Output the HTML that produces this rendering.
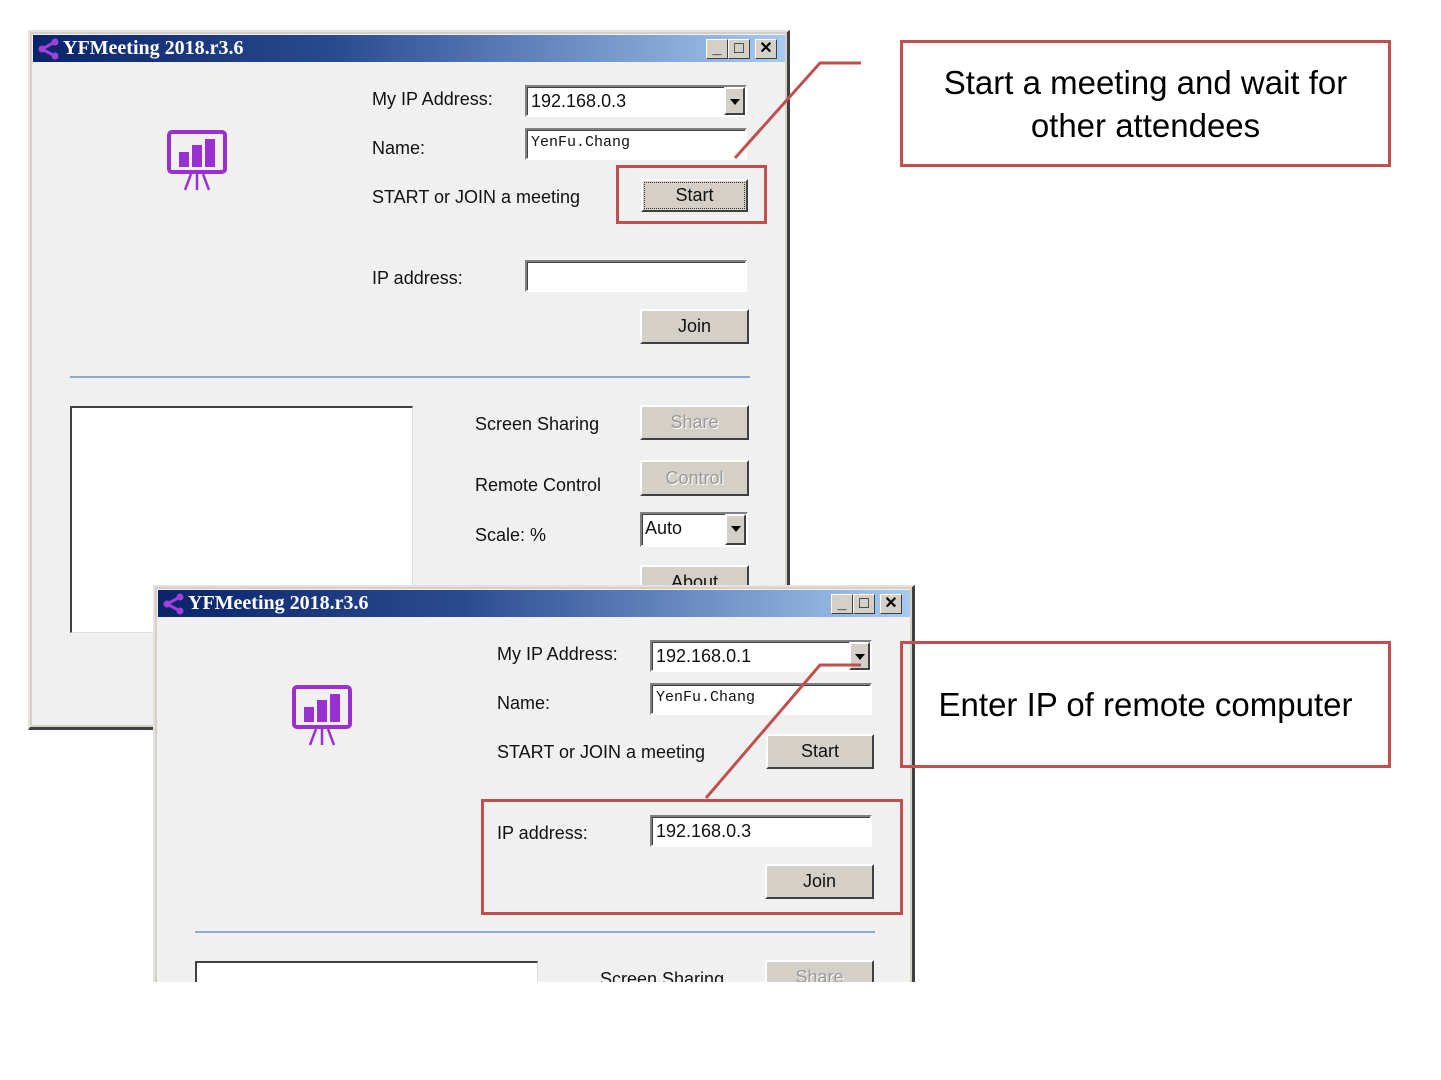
<!DOCTYPE html>
<html style="overflow:hidden;height:1080px"><head><meta charset="utf-8"><style>
html,body{margin:0;width:1441px;height:1080px;overflow:hidden}
body{background:#fff;position:relative;font-family:"Liberation Sans",sans-serif}
.win{position:absolute;background:#f0f0f0;border-left:2px solid #e4e2dc;border-top:2px solid #e4e2dc;border-right:3px solid #404040;border-bottom:3px solid #404040;box-sizing:border-box;overflow:hidden;box-shadow:inset -2px -2px 0 #d4d0c8, inset 2px 2px 0 #d4d0c8}
.a{position:absolute}
.title{left:3px;top:3px;width:752px;height:27px;background:linear-gradient(90deg,#0a246a 0%,#2a4a90 40%,#a6caf0 100%)}
.tt{left:30px;top:2px;color:#fff;font:bold 20px "Liberation Serif",serif;letter-spacing:0px}
.tb{top:4px;width:22px;height:20px;background:#d4d0c8;border:1px solid;border-color:#fff #404040 #404040 #fff;box-sizing:border-box;font:bold 16px "Liberation Sans",sans-serif;text-align:center;line-height:18px;color:#000}
.lbl{font-size:18px;color:#111}
.inp{background:#fff;border:2px solid;border-color:#808080 #fff #fff #808080;box-shadow:inset 1px 1px 0 #404040;box-sizing:border-box;font-size:18px;padding:4px 0 0 4px;color:#111}
.btn{background:#d4d0c8;border:2px solid;border-color:#fff #404040 #404040 #fff;box-sizing:border-box;font-size:18px;text-align:center;color:#111}
.dis{color:#9a9a9a;text-shadow:1px 1px 0 #fff}
.arr{position:absolute;right:0;top:0;width:21px;height:100%;background:#d4d0c8;border:2px solid;border-color:#fff #404040 #404040 #fff;box-sizing:border-box}
.arr:after{content:"";position:absolute;left:4px;top:10px;border-left:5px solid transparent;border-right:5px solid transparent;border-top:6px solid #000}
.mono{font-family:"Liberation Mono",monospace;font-size:15px}
.red{position:absolute;border:3px solid #c0504d;box-sizing:border-box}
.note{position:absolute;border:3px solid #c0504d;box-sizing:border-box;font-size:33px;color:#000;text-align:center;display:flex;align-items:center;justify-content:center;line-height:43px}
.box{background:#fff;border-left:2px solid #404040;border-top:2px solid #404040;border-right:1px solid #ddd;border-bottom:1px solid #ddd;box-sizing:border-box}
</style></head><body>

<!-- Window 1 -->
<div class="win" style="left:28px;top:30px;width:762px;height:700px">
 <div class="a title">
  <svg class="a" style="left:4px;top:3px" width="24" height="22"><g stroke="#a040d8" stroke-width="3"><line x1="18" y1="4" x2="5" y2="11"/><line x1="5" y1="11" x2="18" y2="18"/></g><circle cx="18" cy="4" r="3.5" fill="#a040d8"/><circle cx="5" cy="11" r="3.5" fill="#a040d8"/><circle cx="18" cy="18" r="3.5" fill="#a040d8"/></svg>
  <div class="a tt">YFMeeting 2018.r3.6</div>
  <div class="a tb" style="left:673px">_</div><div class="a tb" style="left:695px">□</div><div class="a tb" style="left:722px">✕</div>
 </div>
 <svg class="a" style="left:135px;top:96px" width="66" height="64"><rect x="4" y="4" width="56" height="40" rx="3" fill="none" stroke="#9b30d0" stroke-width="4"/><rect x="14" y="24" width="10" height="15" fill="#9b30d0"/><rect x="27" y="17" width="10" height="22" fill="#9b30d0"/><rect x="40" y="11" width="10" height="28" fill="#9b30d0"/><g stroke="#9b30d0" stroke-width="2.5"><line x1="26" y1="46" x2="20" y2="62"/><line x1="32" y1="46" x2="32" y2="62"/><line x1="38" y1="46" x2="44" y2="62"/></g></svg>
 <div class="a lbl" style="left:342px;top:57px">My IP Address:</div>
 <div class="a lbl" style="left:342px;top:106px">Name:</div>
 <div class="a lbl" style="left:342px;top:155px">START or JOIN a meeting</div>
 <div class="a lbl" style="left:342px;top:236px">IP address:</div>
 <div class="a inp" style="left:495px;top:53px;width:222px;height:32px">192.168.0.3<div class="arr"></div></div>
 <div class="a inp mono" style="left:495px;top:96px;width:222px;height:32px;padding-top:4px">YenFu.Chang</div>
 <div class="a btn" style="left:611px;top:147px;width:107px;height:33px;line-height:27px"><div style="border:1px dotted #333;margin:1px;line-height:25px">Start</div></div>
 <div class="a inp" style="left:495px;top:228px;width:222px;height:32px"></div>
 <div class="a btn" style="left:610px;top:277px;width:109px;height:35px;line-height:31px">Join</div>
 <div class="a" style="left:40px;top:344px;width:680px;height:2px;background:#8fa8d8"></div>
 <div class="a box" style="left:40px;top:374px;width:343px;height:227px"></div>
 <div class="a lbl" style="left:445px;top:382px">Screen Sharing</div>
 <div class="a lbl" style="left:445px;top:443px">Remote Control</div>
 <div class="a lbl" style="left:445px;top:493px">Scale: %</div>
 <div class="a btn dis" style="left:610px;top:373px;width:109px;height:35px;line-height:31px">Share</div>
 <div class="a btn dis" style="left:610px;top:428px;width:109px;height:36px;line-height:32px">Control</div>
 <div class="a inp" style="left:610px;top:480px;width:108px;height:35px;padding:4px 0 0 3px">Auto<div class="arr"></div></div>
 <div class="a btn" style="left:610px;top:533px;width:109px;height:35px;line-height:31px">About</div>
</div>

<!-- Window 2 -->
<div class="win" style="left:153px;top:585px;width:762px;height:420px;border-bottom:none">
 <div class="a title">
  <svg class="a" style="left:4px;top:3px" width="24" height="22"><g stroke="#a040d8" stroke-width="3"><line x1="18" y1="4" x2="5" y2="11"/><line x1="5" y1="11" x2="18" y2="18"/></g><circle cx="18" cy="4" r="3.5" fill="#a040d8"/><circle cx="5" cy="11" r="3.5" fill="#a040d8"/><circle cx="18" cy="18" r="3.5" fill="#a040d8"/></svg>
  <div class="a tt">YFMeeting 2018.r3.6</div>
  <div class="a tb" style="left:673px">_</div><div class="a tb" style="left:695px">□</div><div class="a tb" style="left:722px">✕</div>
 </div>
 <svg class="a" style="left:135px;top:96px" width="66" height="64"><rect x="4" y="4" width="56" height="40" rx="3" fill="none" stroke="#9b30d0" stroke-width="4"/><rect x="14" y="24" width="10" height="15" fill="#9b30d0"/><rect x="27" y="17" width="10" height="22" fill="#9b30d0"/><rect x="40" y="11" width="10" height="28" fill="#9b30d0"/><g stroke="#9b30d0" stroke-width="2.5"><line x1="26" y1="46" x2="20" y2="62"/><line x1="32" y1="46" x2="32" y2="62"/><line x1="38" y1="46" x2="44" y2="62"/></g></svg>
 <div class="a lbl" style="left:342px;top:57px">My IP Address:</div>
 <div class="a lbl" style="left:342px;top:106px">Name:</div>
 <div class="a lbl" style="left:342px;top:155px">START or JOIN a meeting</div>
 <div class="a lbl" style="left:342px;top:236px">IP address:</div>
 <div class="a inp" style="left:495px;top:53px;width:222px;height:32px">192.168.0.1<div class="arr"></div></div>
 <div class="a inp mono" style="left:495px;top:96px;width:222px;height:32px;padding-top:4px">YenFu.Chang</div>
 <div class="a btn" style="left:611px;top:147px;width:108px;height:35px;line-height:31px">Start</div>
 <div class="a inp" style="left:495px;top:228px;width:222px;height:32px">192.168.0.3</div>
 <div class="a btn" style="left:610px;top:277px;width:109px;height:35px;line-height:31px">Join</div>
 <div class="a" style="left:40px;top:344px;width:680px;height:2px;background:#8fa8d8"></div>
 <div class="a box" style="left:40px;top:374px;width:343px;height:40px"></div>
 <div class="a lbl" style="left:445px;top:382px">Screen Sharing</div>
 <div class="a btn dis" style="left:610px;top:373px;width:109px;height:35px;line-height:31px">Share</div>
</div>
<div class="a" style="left:0;top:982px;width:1441px;height:98px;background:#fff"></div>

<!-- Annotations -->
<div class="note" style="left:900px;top:40px;width:491px;height:127px">Start a meeting and wait for<br>other attendees</div>
<div class="note" style="left:900px;top:641px;width:491px;height:127px">Enter IP of remote computer</div>
<div class="red" style="left:616px;top:165px;width:151px;height:59px"></div>
<div class="red" style="left:481px;top:799px;width:422px;height:116px"></div>
<svg class="a" style="left:0;top:0;display:block" width="1441" height="1000"><g stroke="#c0504d" stroke-width="3" fill="none"><polyline points="735,158 820,63 861,63"/><polyline points="706,798 820,665 861,665"/></g></svg>
</body></html>
